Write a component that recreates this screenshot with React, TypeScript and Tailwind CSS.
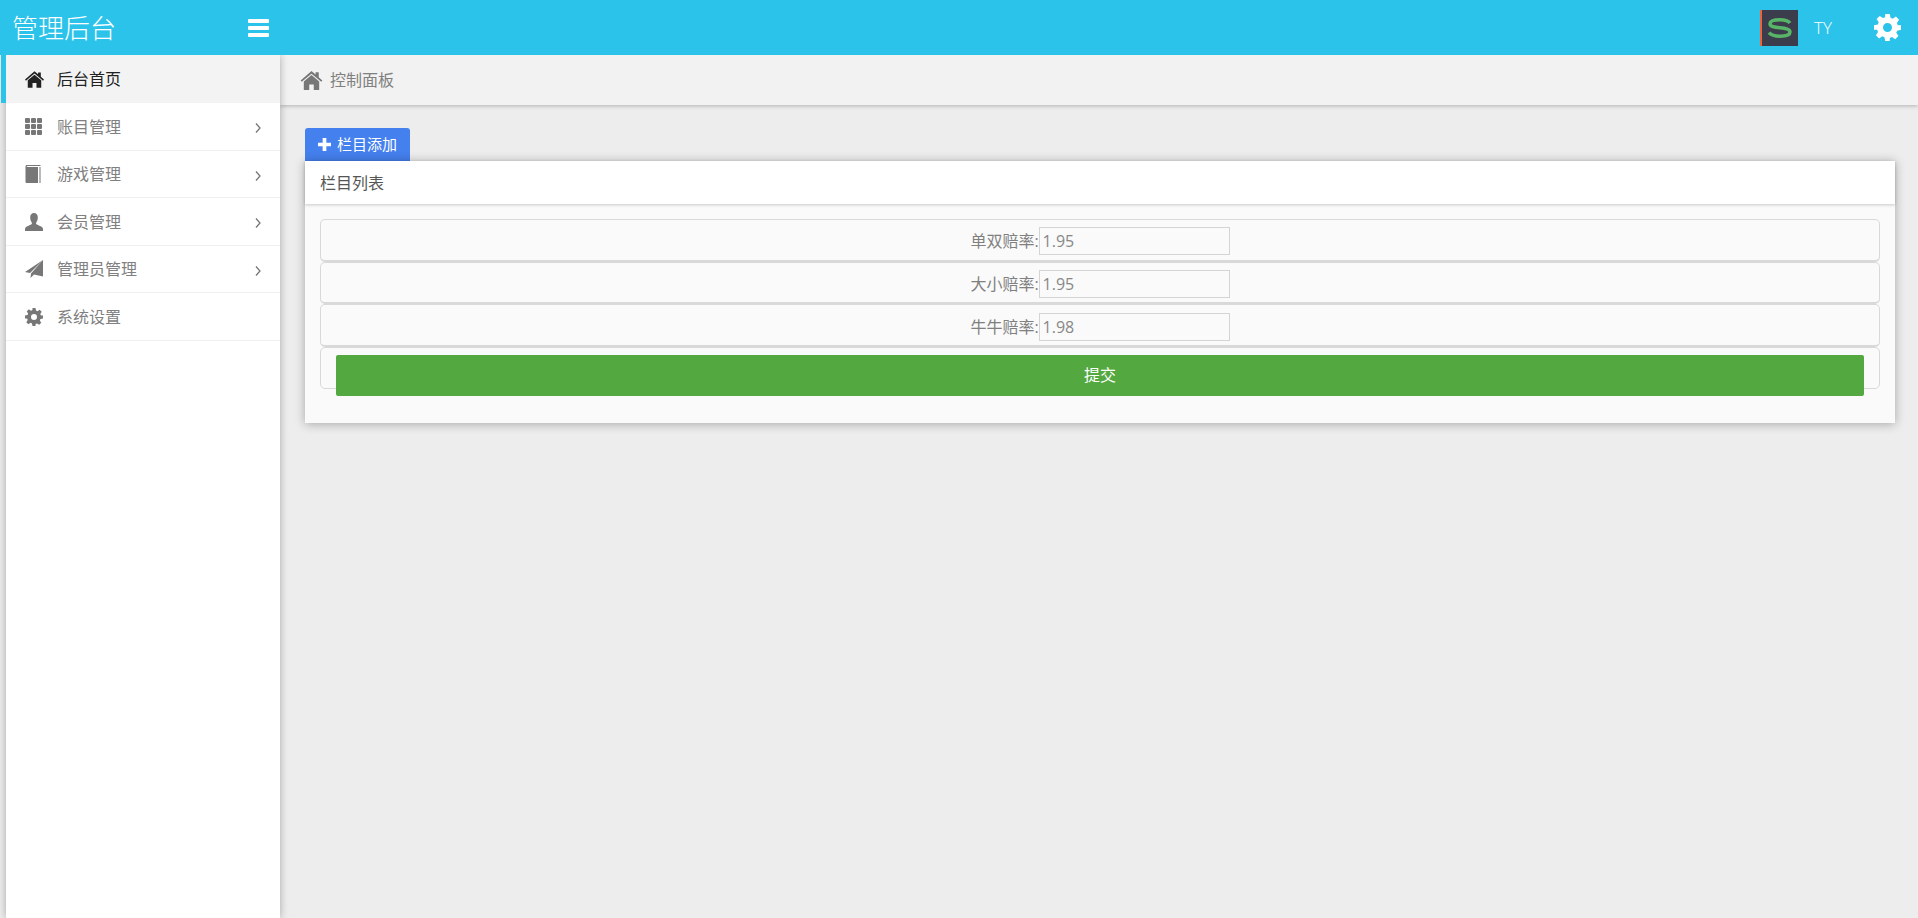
import type { ReactNode } from 'react'

const font = 'font-["Open_Sans","Noto_Sans_CJK_SC",sans-serif]'

function HomeIcon({ className }: { className: string }) {
  return (
    <svg viewBox="0 0 24 21" className={className} fill="currentColor">
      <path d="M12 0 0 10.500 1.200 12 12 3 22.800 12 24 10.500 20 7V1.500H16.500V4z" />
      <path d="M12 4.500 3.500 11.500V21H9.500V15H14.500V21H20.500V11.500z" />
    </svg>
  )
}

function ThIcon({ className }: { className: string }) {
  return (
    <svg viewBox="0 0 17 17" className={className} fill="currentColor">
      <rect x="0" y="0" width="5" height="5" rx="1" />
      <rect x="6" y="0" width="5" height="5" rx="1" />
      <rect x="12" y="0" width="5" height="5" rx="1" />
      <rect x="0" y="6" width="5" height="5" rx="1" />
      <rect x="6" y="6" width="5" height="5" rx="1" />
      <rect x="12" y="6" width="5" height="5" rx="1" />
      <rect x="0" y="12" width="5" height="5" rx="1" />
      <rect x="6" y="12" width="5" height="5" rx="1" />
      <rect x="12" y="12" width="5" height="5" rx="1" />
    </svg>
  )
}

function BookIcon({ className }: { className: string }) {
  return (
    <svg viewBox="0 0 17 18" className={className} fill="currentColor">
      <path d="M2 0h13.500v1H2.500C2 1 1.500 1.200 1.500 1.500S2 2 2.500 2H13V18H2C1 18 .5 17.500 .5 16.500V1.500C.5 .6 1 0 2 0z" />
      <path d="M14.500 2h1v16h-1z" />
    </svg>
  )
}

function UserIcon({ className }: { className: string }) {
  return (
    <svg viewBox="0 0 18 18" className={className} fill="currentColor">
      <path d="M9 0c2.400 0 3.800 1.800 3.800 4.300 0 2-.6 4-1.400 5-.5.500-.5 1.500.1 2 1 .8 3 1.400 4.700 2.200 1 .5 1.800 1.500 1.800 2.800V18H0v-1.700c0-1.300.8-2.300 1.800-2.800 1.700-.8 3.700-1.400 4.700-2.200.6-.5.6-1.500.1-2-.8-1-1.400-3-1.400-5C5.200 1.800 6.600 0 9 0z" />
    </svg>
  )
}

function SendIcon({ className }: { className: string }) {
  return (
    <svg viewBox="0 0 18 18" className={className} fill="currentColor">
      <path d="M18 0 0 12l5 1L18 0zM18 0 6 13.500 5.500 18 9 14.500l9 2z" />
    </svg>
  )
}

function CogIcon({ className }: { className: string }) {
  return (
    <svg viewBox="0 0 24 24" className={className} fill="currentColor">
      <path
        fillRule="evenodd"
        d="M10 0h4l.7 3.400 1.900.8 2.900-1.900 2.800 2.800-1.900 2.900.8 1.900L24 10.100v4l-3.400.7-.8 1.900 1.900 2.900-2.800 2.800-2.900-1.900-1.900.8L14 24h-4l-.7-3.400-1.900-.8-2.900 1.900-2.800-2.800 1.900-2.900-.8-1.900L0 14v-4l3.400-.7.8-1.900-1.900-2.900L5.100 1.700 8 3.600l1.900-.8zM12 8a4 4 0 1 0 0 8 4 4 0 0 0 0-8z"
      />
    </svg>
  )
}

function Chevron() {
  return (
    <svg viewBox="0 0 6 10" className="w-[6px] h-[10px] mt-[3px] text-[#777]" fill="none" stroke="currentColor" strokeWidth="1.300">
      <path d="M1 .5l4 4.500-4 4.500" />
    </svg>
  )
}

function NavItem({ icon, label, arrow, active }: { icon: ReactNode; label: string; arrow?: boolean; active?: boolean }) {
  if (active) {
    return (
      <div className="h-[48px] -ml-[5px] border-l-[5px] border-[#2cc3ea] bg-[#f3f3f3] flex items-center pl-[19px] text-[#222] relative">
        <span className="w-[32px] flex">{icon}</span>
        <span className="text-[16px] leading-none">{label}</span>
      </div>
    )
  }
  return (
    <div className="h-[47.500px] border-b border-[#f0f0f0] flex items-center pl-[19px] pr-[19px] pt-[1px] text-[#777]">
      <span className="w-[32px] flex">{icon}</span>
      <span className="text-[16px] leading-none flex-1 text-[#808080]">{label}</span>
      {arrow && <Chevron />}
    </div>
  )
}

function RateRow({ label, value }: { label: string; value: string }) {
  return (
    <div className="h-[42.670px] border border-[#d9d9d9] border-b-2 rounded-[5px] pt-[3px] flex items-center justify-center text-[16px] text-[#808080]">
      <span>{label}:</span>
      <input
        readOnly
        value={value}
        className="w-[191px] h-[28px] border border-[#d4d4d4] px-[3px] text-[16px] text-[#888] outline-none"
      />
    </div>
  )
}

export default function App() {
  return (
    <div className={`h-screen overflow-hidden flex flex-col bg-[#ededed] ${font}`}>
      <header className="h-[55px] shrink-0 bg-[#2cc3ea] flex items-center text-white relative z-20">
        <div className="w-[280px] pl-[12px] pr-[11px] flex items-center justify-between">
          <span className="text-[26px] font-light leading-none">管理后台</span>
          <span className="flex flex-col gap-[3px] w-[21px]">
            <i className="h-[4px] bg-white rounded-[1px]" />
            <i className="h-[4px] bg-white rounded-[1px]" />
            <i className="h-[4px] bg-white rounded-[1px]" />
          </span>
        </div>
        <div className="flex-1" />
        <div className="w-[38px] h-[36px] bg-[#3b3d4c] border-l-2 border-[#f0633a] flex items-center justify-center">
          <svg viewBox="0 0 26 20" className="w-[26px] h-[20px]" fill="none" stroke="#58b467" strokeWidth="3.500">
            <path d="M23 5C21 2.500 17 1.800 13 1.800 7 1.800 3 3.200 3 5.800c0 2.800 4 3.400 10 4 6 .6 10 1.300 10 4.200 0 2.700-4 4.200-10 4.200-4.500 0-9-1-11-3.500" />
          </svg>
        </div>
        <span className="ml-[16px] w-[60px] text-[17px] font-light leading-none">TY</span>
        <CogIcon className="w-[27px] h-[27px] mr-[17px]" />
      </header>

      <div className="flex-1 flex min-h-0">
        <aside className="ml-[6px] w-[274px] shrink-0 bg-white shadow-[0_0_8px_rgba(0,0,0,0.3)] relative z-10">
          <NavItem active icon={<HomeIcon className="w-[19px] h-[17px]" />} label="后台首页" />
          <NavItem arrow icon={<ThIcon className="w-[17px] h-[17px]" />} label="账目管理" />
          <NavItem arrow icon={<BookIcon className="w-[17px] h-[18px]" />} label="游戏管理" />
          <NavItem arrow icon={<UserIcon className="w-[18px] h-[18px]" />} label="会员管理" />
          <NavItem arrow icon={<SendIcon className="w-[18px] h-[18px]" />} label="管理员管理" />
          <NavItem icon={<CogIcon className="w-[18px] h-[18px]" />} label="系统设置" />
        </aside>

        <main className="flex-1 min-w-0">
          <div className="h-[50px] bg-[#f2f2f2] shadow-[0_1px_4px_rgba(0,0,0,0.25)] flex items-center pl-[20px] text-[#777]">
            <HomeIcon className="w-[23px] h-[19px] mr-[7px]" />
            <span className="text-[16px] text-[#808080]">控制面板</span>
          </div>

          <div className="pt-[23px] pl-[25px] pr-[23px]">
            <button className="h-[33px] w-[105px] bg-[#4480ee] rounded-t-[3px] text-white text-[15px] flex items-center justify-center gap-[6px]">
              <svg viewBox="0 0 14 14" className="w-[13px] h-[13px]" fill="currentColor">
                <path d="M5 0h4v5h5v4H9v5H5V9H0V5h5z" />
              </svg>
              栏目添加
            </button>

            <section className="bg-[#fafafa] shadow-[0_1px_10px_rgba(0,0,0,0.3)] h-[262px]">
              <div className="h-[43px] bg-white shadow-[0_1px_3px_rgba(0,0,0,0.2)] flex items-center pl-[15px] text-[16px] text-[#555]">
                栏目列表
              </div>
              <div className="pt-[15px] px-[15px]">
                <RateRow label="单双赔率" value="1.95" />
                <RateRow label="大小赔率" value="1.95" />
                <RateRow label="牛牛赔率" value="1.98" />
                <div className="h-[42px] border border-[#d9d9d9] rounded-[5px] px-[15px] pt-[7px]">
                  <button className="w-full h-[41px] bg-[#53a840] rounded-[2px] text-white text-[16px]">提交</button>
                </div>
              </div>
            </section>
          </div>
        </main>
      </div>
    </div>
  )
}
